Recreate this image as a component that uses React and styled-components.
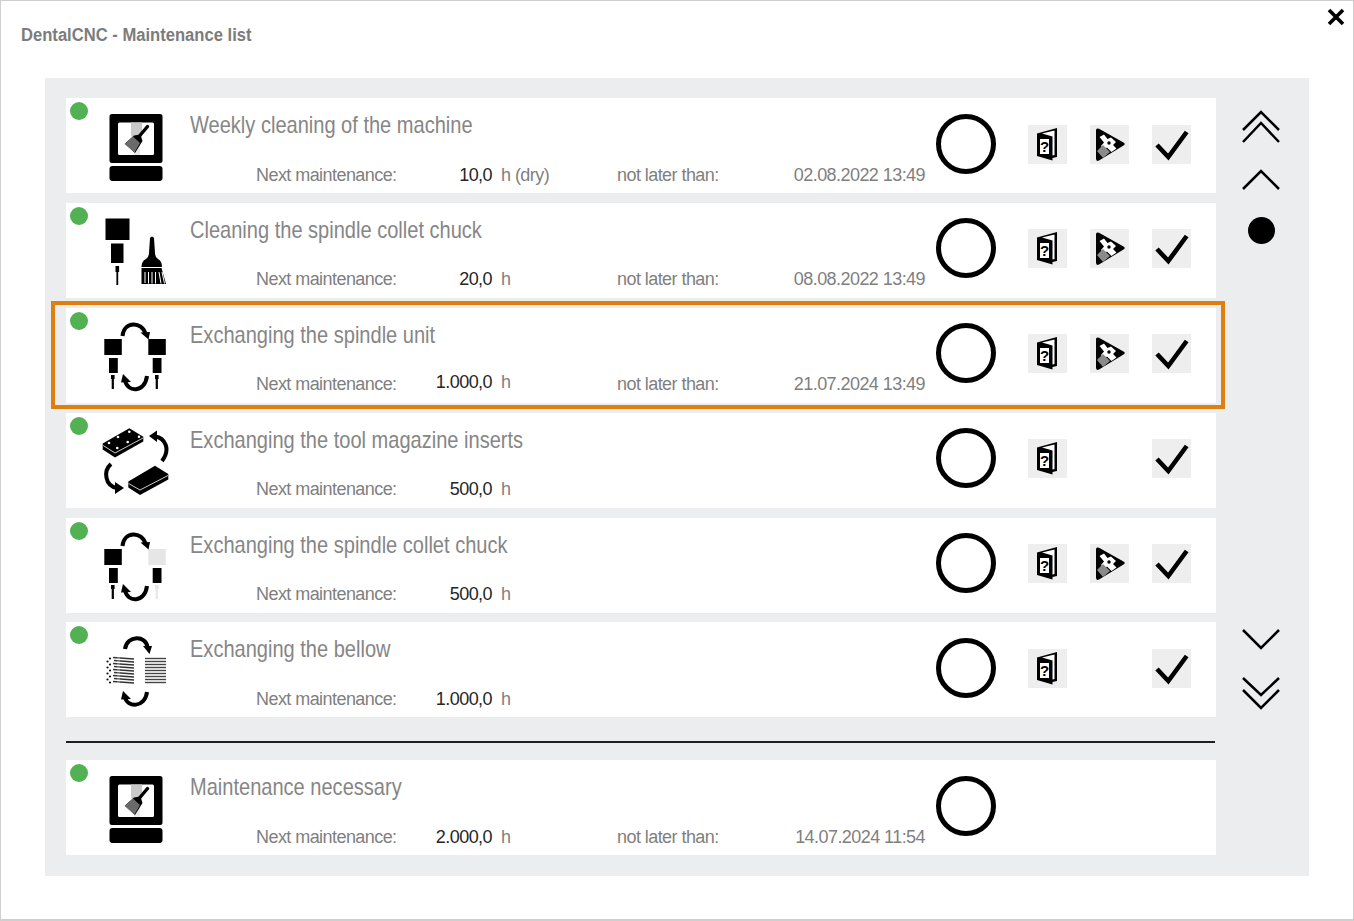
import React from "react";
import styled, { createGlobalStyle } from "styled-components";

const Global = createGlobalStyle`
  html, body { margin: 0; padding: 0; background: #fff; }
  body { font-family: "Liberation Sans", Arial, sans-serif; }
`;

const Dialog = styled.div`
  position: relative;
  box-sizing: border-box;
  width: 1354px;
  height: 921px;
  background: #fff;
  border: 1px solid #cfcfcf;
  border-bottom-width: 2px;
  padding: 0 44px 0 44px;
`;
const Header = styled.h1`
  margin: 0 0 0 -24px;
  height: 77px;
  padding-top: 23px;
  box-sizing: border-box;
  font-size: 18px;
  line-height: 22px;
  font-weight: 700;
  color: #7c7c7c;
  transform: scaleX(0.922);
  transform-origin: left center;
`;
const Close = styled.svg`
  position: absolute;
  top: 6px;
  right: 7px;
  width: 20px;
  height: 20px;
`;
const Panel = styled.main`
  display: flex;
  width: 1264px;
  height: 798px;
  box-sizing: border-box;
  padding: 20px 3px 20px 21px;
  background: #ecedef;
`;
const List = styled.div`
  width: 1150px;
  display: flex;
  flex-direction: column;
  gap: 9.9px;
`;
const Row = styled.article`
  position: relative;
  display: flex;
  align-items: flex-start;
  height: 95px;
  padding-left: 4px;
  background: #fff;
  ${(p) =>
    p.$selected &&
    `&::after {
      content: "";
      position: absolute;
      inset: -7px -9px -6px -15px;
      border: 4px solid #de7f0f;
      pointer-events: none;
    }`}
`;
const Dot = styled.span`
  flex: none;
  width: 18px;
  height: 18px;
  margin-top: 4px;
  border-radius: 50%;
  background: #52b153;
`;
const IconSvg = styled.svg`
  flex: none;
  width: 70px;
  height: 95px;
  margin-left: 12px;
`;
const Body = styled.div`
  flex: none;
  width: 735px;
  height: 95px;
  box-sizing: border-box;
  margin-left: 20px;
  padding: 13px 0 7.5px;
  display: flex;
  flex-direction: column;
  justify-content: space-between;
`;
const Title = styled.div`
  font-size: 24px;
  line-height: 28px;
  color: #868686;
  white-space: nowrap;
  transform: scaleX(0.835);
  transform-origin: left center;
`;
const Meta = styled.div`
  display: grid;
  grid-template-columns: 141px 95px 125px 308px;
  margin-left: 66px;
  font-size: 18px;
  line-height: 22px;
  letter-spacing: -0.56px;
  color: #7f7f7f;
  white-space: nowrap;
`;
const Value = styled.span`
  text-align: right;
  color: #262626;
  ${(p) => p.$raised && "transform: translateY(-2px);"}
`;
const Unit = styled.span`
  padding-left: 9px;
  ${(p) => p.$raised && "transform: translateY(-2px);"}
`;
const Deadline = styled.span`
  display: flex;
  justify-content: space-between;
`;
const Ring = styled.span`
  flex: none;
  box-sizing: border-box;
  width: 60px;
  height: 60px;
  margin: 15.5px 0 0 11px;
  border: 5px solid #000;
  border-radius: 50%;
`;
const Actions = styled.div`
  flex: none;
  display: grid;
  grid-template-columns: repeat(3, 39px);
  gap: 23px;
  margin: 26.5px 0 0 32px;
`;
const ActionButton = styled.button`
  grid-column: ${(p) => p.$col};
  width: 39px;
  height: 39px;
  padding: 0;
  border: 0;
  background: #eeeeef;
  display: block;
  svg { display: block; }
`;
const Divider = styled.hr`
  width: 1149px;
  height: 2px;
  margin: 13.6px 0 7.6px;
  border: 0;
  background: #1f1f1f;
  flex: none;
`;
const Pager = styled.nav`
  flex: 1;
  display: flex;
  flex-direction: column;
  justify-content: space-between;
  align-items: center;
  margin: 11px 0 145px;
`;
const PagerGroup = styled.div`
  display: flex;
  flex-direction: column;
  align-items: center;
  gap: ${(p) => p.$gap}px;
`;
const Chevrons = styled.svg`
  width: 40px;
  height: ${(p) => p.$h}px;
  display: block;
`;
const PageDot = styled.span`
  width: 27px;
  height: 27px;
  margin-top: 4px;
  border-radius: 50%;
  background: #000;
`;

/* curved exchange arrow: arc plus a head at the tip */
const Arc = ({ d, head }) => (
  <g>
    <path d={d} fill="none" stroke="#000" strokeWidth="4" />
    <polygon points={head} fill="#000" />
  </g>
);

const Monitor = () => (
  <>
    <rect x="9.5" y="16" width="53" height="49" rx="2.5" fill="#000" />
    <rect x="9.5" y="68" width="53" height="15" rx="3" fill="#000" />
    <rect x="18" y="24.5" width="36" height="32.5" rx="1.5" fill="#fff" />
    <rect x="31" y="24.5" width="11" height="14" fill="#c9c9c9" />
    <rect x="34" y="38" width="6" height="19" fill="#e9e9e9" />
    <path d="M47.5 28.5 L39.5 38" stroke="#000" strokeWidth="3.4" strokeLinecap="round" />
    <path d="M40.5 36.5 L34 37.5 L25 45.5 L35 55 L42.5 43 Z" fill="#000" />
    <path d="M24.5 46 L33 38.5 L40 45 L34.5 54.5 Z" fill="#6a6a6a" />
  </>
);

const SpindleBrush = () => (
  <>
    <rect x="5.5" y="15.5" width="24" height="21.5" fill="#000" />
    <rect x="11" y="40.5" width="12.5" height="19.5" fill="#000" />
    <rect x="15.5" y="63" width="3.6" height="6" fill="#000" />
    <rect x="16.4" y="68" width="1.8" height="14" fill="#000" />
    <path d="M50 35 Q52 32 54 35 L55 50 Q55 54 58 56 Q62 58 62 64 L41.5 64 Q41.5 58 46 56 Q49 54 49 50 Z" fill="#000" />
    <path d="M41.5 65 L61.5 65 L66 81 L41.5 81 Z" fill="#000" />
    <path d="M45 69 V80 M48.5 69 V80.5 M52 69 V80.5 M55.5 69 V80.5 M59 69 L61 80.5 M62 69 L64.5 80.5" stroke="#fff" strokeWidth="1" />
  </>
);

const SpindleSwap = ({ ghost }) => (
  <>
    <rect x="4.3" y="31" width="17.5" height="16" fill="#000" />
    <rect x="9" y="50" width="8.8" height="15" fill="#000" />
    <rect x="11.7" y="67" width="2.2" height="14" fill="#000" />
    <rect x="11" y="67" width="3.6" height="4" fill="#000" />
    <rect x="48.3" y="31" width="17.5" height="16" fill={ghost ? "#e6e6e6" : "#000"} />
    <rect x="52.7" y="50" width="8.8" height="15" fill="#000" />
    <rect x="55.7" y="67" width="2.2" height="14" fill={ghost ? "#e6e6e6" : "#000"} />
    <rect x="55" y="67" width="3.6" height="4" fill={ghost ? "#e6e6e6" : "#000"} />
    <Arc d="M22.5 28 C24 13 42 13 45.5 26" head="40.5,24.5 50,24 48.5,31.5" />
    <Arc d="M47 68 C45 85 27 85 25 72" head="21,74.5 31,74 23,66" />
  </>
);

const Magazine = () => (
  <>
    <path d="M2.7 30.5 L29.3 15.3 L43.3 23.7 L43.3 28.5 L15 44.5 L2.7 36.5 Z" fill="#000" />
    <path d="M3.2 32.5 L15 40 L43 25" fill="none" stroke="#fff" strokeWidth="0.8" />
    {[[9, 30], [17.3, 35], [18, 24], [27.7, 29], [29.3, 18.7], [39, 23.7]].map(([x, y]) => (
      <circle key={`${x}-${y}`} cx={x} cy={y} r="1.3" fill="#fff" />
    ))}
    <path d="M28.3 68.5 L55 52.7 L68.3 61 L68.3 66.5 L40 82 L28.3 74.5 Z" fill="#000" />
    <path d="M28.6 70.5 L40 77 L68 62.5" fill="none" stroke="#fff" strokeWidth="0.8" />
    <Arc d="M55 23.5 C65 25 71 36 62 48" head="49,23 57,17.5 57,29" />
    <Arc d="M11 51 C3 58 5 73 17 75" head="15,69 24,75 15,81" />
  </>
);

const Bellow = () => {
  const ys = [35.5, 38.5, 41.5, 44.5, 47.5, 50.5, 53.5, 56.5, 59.5];
  return (
    <>
      {ys.map((y, i) => (
        <g key={y}>
          <path d={`M${13 + (i % 2)} ${y} L34 ${y + 1.5}`} stroke="#333" strokeWidth="1.7" />
          <path d={`M45 ${y + 1} L66 ${y + 1}`} stroke="#444" strokeWidth="1.4" />
          <circle cx={i % 2 ? 7.5 : 10} cy={y + 1} r="1.1" fill="#111" />
        </g>
      ))}
      <rect x="17" y="35" width="3" height="27" fill="#fff" opacity="0.25" />
      <Arc d="M25 27 C27 13 46 13 47.5 25" head="43,24 52,24 49.5,32" />
      <Arc d="M47 70 C45 86 27 86 25 75" head="21,77.5 31,77 23,69" />
    </>
  );
};

const rowIcons = {
  monitor: <Monitor />,
  brush: <SpindleBrush />,
  swap: <SpindleSwap />,
  magazine: <Magazine />,
  swapGhost: <SpindleSwap ghost />,
  bellow: <Bellow />,
};

const Guide = () => (
  <svg width="39" height="39" viewBox="0 0 39 39">
    <path d="M9 8.5 L29 3 V32 L24.5 33 V35.5 L9 31 Z" fill="#000" />
    <path d="M14 8.5 L26.5 5.5 V30 L24.5 30.5 V11.5 Z" fill="#fff" />
    <rect x="12" y="14" width="9" height="15" fill="#fff" />
    <text x="16.5" y="27" textAnchor="middle" fontFamily="Liberation Sans" fontWeight="700" fontSize="15" fill="#000">?</text>
  </svg>
);

const Service = () => (
  <svg width="39" height="39" viewBox="0 0 39 39">
    <path d="M6 5.5 Q6 2.5 9 3.8 L33.5 17.5 Q36 19 33.5 20.5 L9 35.5 Q6 37 6 33.5 Z" fill="#000" />
    <path d="M9.5 12 L14 9.5 L17.5 14 L21 12.5 L26 17 L23 20 L26.5 23.5 L21.5 27 L17 22.5 L14 25 L11 21 L14 17.5 Z" fill="#fff" />
    <circle cx="19" cy="18" r="1.7" fill="#000" />
    <path d="M7 26 L13 20 L20 27 L13 33 Z" fill="#8a8a8a" />
  </svg>
);

const Check = () => (
  <svg width="39" height="39" viewBox="0 0 39 39">
    <path d="M5 20 L16.3 32 L34.7 7" fill="none" stroke="#000" strokeWidth="4.6" />
  </svg>
);

const rows = [
  { icon: "monitor", title: "Weekly cleaning of the machine", value: "10,0", unit: "h (dry)", date: "02.08.2022 13:49", play: true, actions: true },
  { icon: "brush", title: "Cleaning the spindle collet chuck", value: "20,0", unit: "h", date: "08.08.2022 13:49", play: true, actions: true },
  { icon: "swap", title: "Exchanging the spindle unit", value: "1.000,0", unit: "h", date: "21.07.2024 13:49", play: true, actions: true, selected: true },
  { icon: "magazine", title: "Exchanging the tool magazine inserts", value: "500,0", unit: "h", actions: true },
  { icon: "swapGhost", title: "Exchanging the spindle collet chuck", value: "500,0", unit: "h", play: true, actions: true },
  { icon: "bellow", title: "Exchanging the bellow", value: "1.000,0", unit: "h", actions: true },
];

const MaintenanceRow = ({ icon, title, value, unit, date, play, actions, selected }) => (
  <Row $selected={selected}>
    <Dot />
    <IconSvg viewBox="0 0 70 95">{rowIcons[icon]}</IconSvg>
    <Body>
      <Title>{title}</Title>
      <Meta>
        <span>Next maintenance:</span>
        <Value $raised={selected}>{value}</Value>
        <Unit $raised={selected}>{unit}</Unit>
        {date && (
          <Deadline>
            <span>not later than:</span>
            <span>{date}</span>
          </Deadline>
        )}
      </Meta>
    </Body>
    <Ring />
    {actions && (
      <Actions>
        <ActionButton $col={1} aria-label="Guide"><Guide /></ActionButton>
        {play && <ActionButton $col={2} aria-label="Service"><Service /></ActionButton>}
        <ActionButton $col={3} aria-label="Done"><Check /></ActionButton>
      </Actions>
    )}
  </Row>
);

export default function App() {
  return (
    <>
      <Global />
      <Dialog>
        <Header>DentalCNC - Maintenance list</Header>
        <Close viewBox="0 0 20 20">
          <path d="M3 3 L17 17 M17 3 L3 17" stroke="#000" strokeWidth="3.6" />
        </Close>
        <Panel>
          <List>
            {rows.map((r) => (
              <MaintenanceRow key={r.title} {...r} />
            ))}
            <Divider />
            <MaintenanceRow
              icon="monitor"
              title="Maintenance necessary"
              value="2.000,0"
              unit="h"
              date="14.07.2024 11:54"
            />
          </List>
          <Pager>
            <PagerGroup $gap={22}>
              <Chevrons $h={36} viewBox="0 0 40 36">
                <path d="M2 21 L20 3 L38 21" fill="none" stroke="#000" strokeWidth="2.5" />
                <path d="M2 33 L20 14 L38 33" fill="none" stroke="#000" strokeWidth="2.5" />
              </Chevrons>
              <Chevrons $h={24} viewBox="0 0 40 24">
                <path d="M2 22 L20 4 L38 22" fill="none" stroke="#000" strokeWidth="2.5" />
              </Chevrons>
              <PageDot />
            </PagerGroup>
            <PagerGroup $gap={25}>
              <Chevrons $h={24} viewBox="0 0 40 24">
                <path d="M2 4 L20 22 L38 4" fill="none" stroke="#000" strokeWidth="2.5" />
              </Chevrons>
              <Chevrons $h={36} viewBox="0 0 40 36">
                <path d="M2 3 L20 20 L38 3" fill="none" stroke="#000" strokeWidth="2.5" />
                <path d="M2 15 L20 33 L38 15" fill="none" stroke="#000" strokeWidth="2.5" />
              </Chevrons>
            </PagerGroup>
          </Pager>
        </Panel>
      </Dialog>
    </>
  );
}
